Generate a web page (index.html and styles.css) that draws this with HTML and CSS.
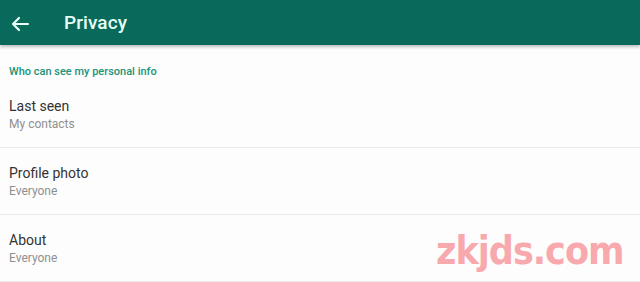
FILE: index.html
```html
<!DOCTYPE html>
<html>
<head>
<meta charset="utf-8">
<link rel="stylesheet" href="styles.css">
</head>
<body>
<header class="appbar">
  <svg class="back" width="20" height="16" viewBox="0 0 20 16">
    <path d="M18 8H3M9 2L3 8l6 6" fill="none" stroke="#e6fff7" stroke-width="2.2" stroke-linecap="round" stroke-linejoin="round"/>
  </svg>
  <h1 class="title">Privacy</h1>
</header>
<main class="content">
  <div class="section-label">Who can see my personal info</div>
  <div class="row">
    <div class="row-title">Last seen</div>
    <div class="row-sub">My contacts</div>
  </div>
  <div class="row">
    <div class="row-title">Profile photo</div>
    <div class="row-sub">Everyone</div>
  </div>
  <div class="row">
    <div class="row-title">About</div>
    <div class="row-sub">Everyone</div>
  </div>
  <div class="watermark">zkjds.com</div>
</main>
</body>
</html>
```

FILE: styles.css
```css
* { box-sizing: border-box; margin: 0; padding: 0; }
html, body { width: 640px; height: 282px; overflow: hidden; background: #fdfdfd; }
body { font-family: Roboto, "Liberation Sans", sans-serif; }

.appbar {
  height: 45px;
  background: #09695a;
  display: flex;
  align-items: center;
  padding-left: 10px;
  box-shadow: 0 2px 3px rgba(0,0,0,0.25);
  position: relative;
  z-index: 1;
}
.back { flex: none; margin-top: 2px; }
.title {
  margin-left: 34px;
  font-size: 19px;
  font-weight: 500;
  color: #e6fff7;
  letter-spacing: 0.1px;
}

.content { position: relative; }
.section-label {
  padding: 20px 0 0 9px;
  height: 36px;
  font-size: 11px;
  font-weight: 500;
  color: #1a9379;
  line-height: 13px;
}
.row {
  height: 67px;
  padding-left: 9px;
  padding-top: 2px;
  display: flex;
  flex-direction: column;
  justify-content: center;
  border-bottom: 1px solid #e9e9e9;
}
.row-title {
  font-size: 14px;
  color: #333;
  line-height: 18px;
}
.row-sub {
  font-size: 12px;
  color: #8f8f8f;
  line-height: 18px;
}
.watermark {
  position: absolute;
  left: 436px;
  top: 186px;
  font-family: "DejaVu Sans Condensed", "DejaVu Sans", sans-serif;
  font-weight: bold;
  font-size: 39px;
  line-height: 1;
  color: #f7a9ad;
  letter-spacing: -1px;
}
```
